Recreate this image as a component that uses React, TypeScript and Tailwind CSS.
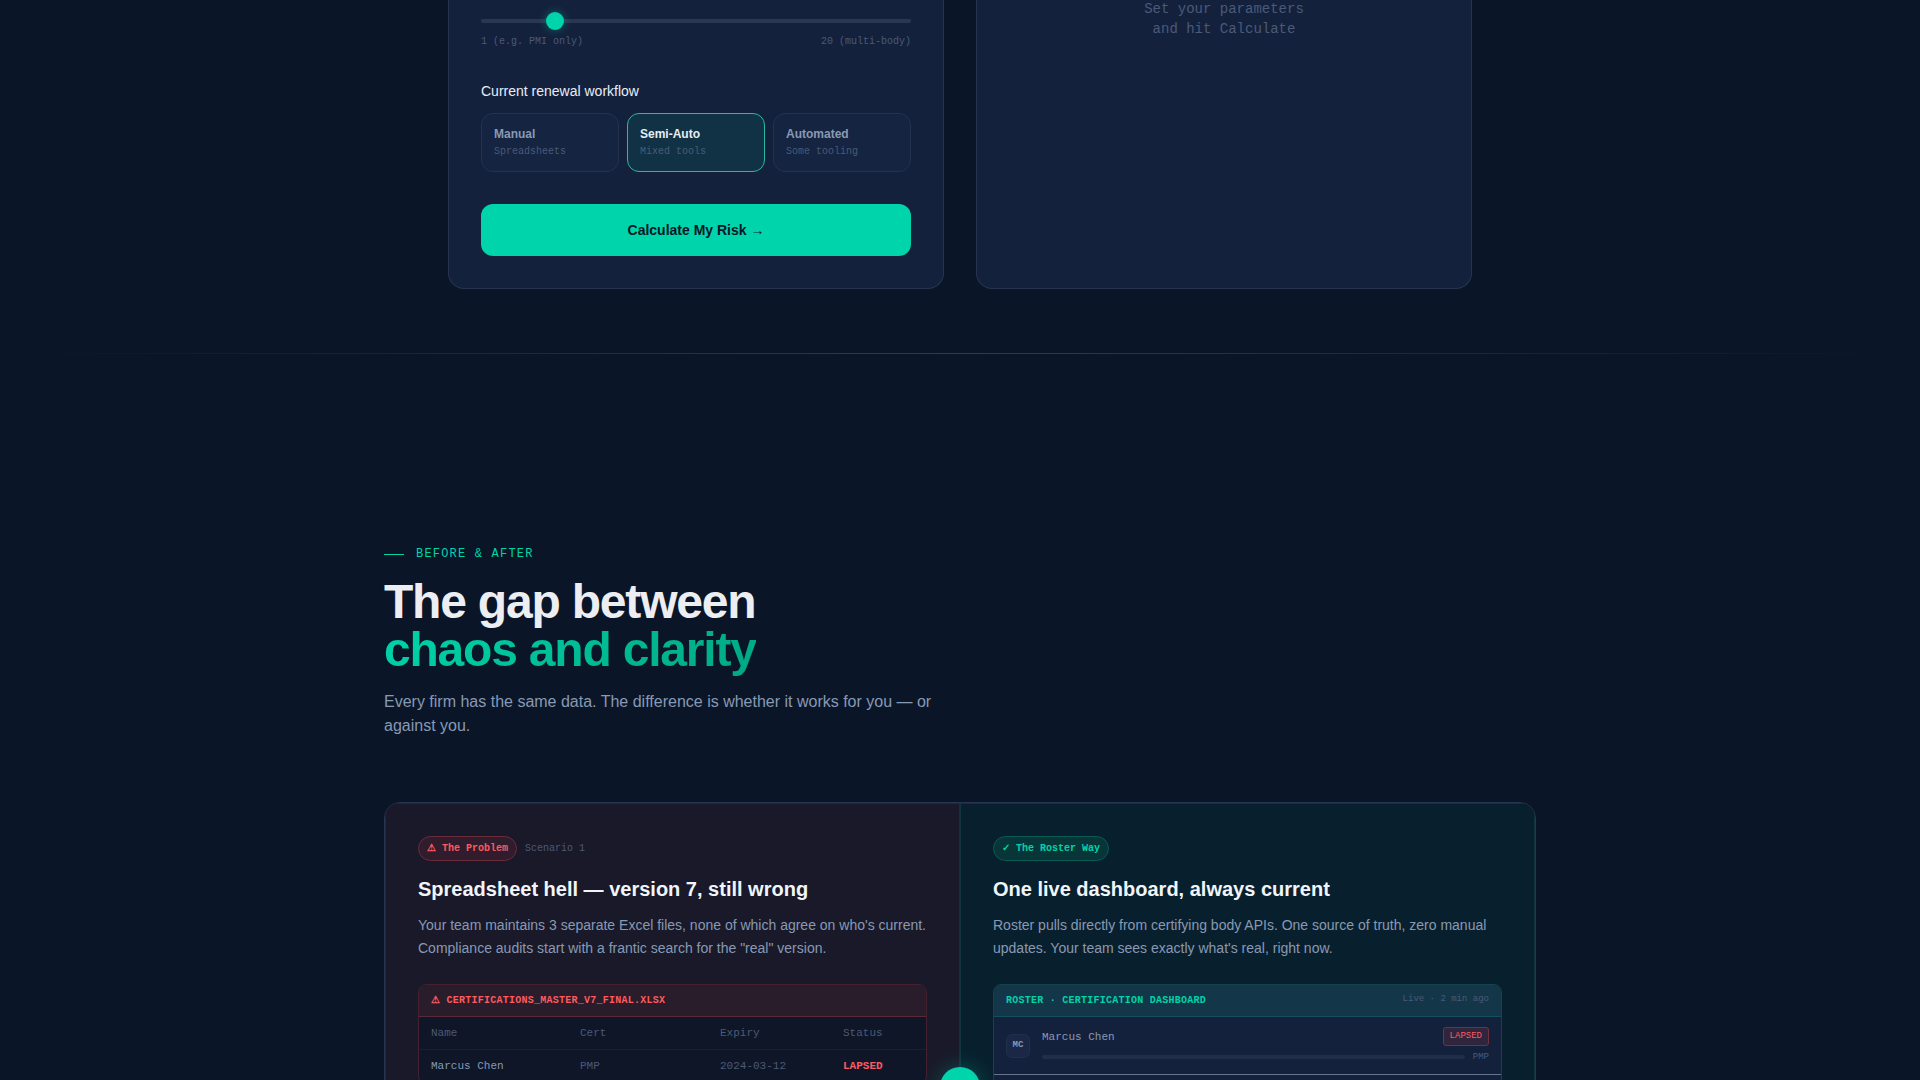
import { useState } from "react";

const workflows = [
  { id: "manual", title: "Manual", note: "Spreadsheets" },
  { id: "semi", title: "Semi-Auto", note: "Mixed tools" },
  { id: "auto", title: "Automated", note: "Some tooling" },
];

const mono = "font-['Liberation_Mono',monospace]";

function Glyph({ children }: { children: string }) {
  return <span className="font-['Liberation_Mono'] leading-none">{children}</span>;
}

function RiskCalculator() {
  const [bodies, setBodies] = useState(4);
  const [workflow, setWorkflow] = useState("semi");
  return (
    <section className="mx-auto grid w-full max-w-5xl grid-cols-2 gap-8">
      <form
        className="rounded-b-2xl border border-t-0 border-[#26344f] bg-[#14213d] px-8 pt-[19px] pb-8"
        onSubmit={(e) => e.preventDefault()}
      >
        <input
          type="range"
          min={1}
          max={20}
          value={bodies}
          aria-label="Certifying bodies"
          onChange={(e) => setBodies(Number(e.target.value))}
          className="block h-1 w-full cursor-pointer appearance-none rounded-full bg-[#2a3752] outline-none [&::-webkit-slider-thumb]:h-[18px] [&::-webkit-slider-thumb]:w-[18px] [&::-webkit-slider-thumb]:appearance-none [&::-webkit-slider-thumb]:rounded-full [&::-webkit-slider-thumb]:bg-[#00d4aa] [&::-webkit-slider-thumb]:shadow-[0_0_8px_rgba(0,212,170,0.4)]"
        />
        <div className={`${mono} mt-[11px] flex justify-between text-[10px] leading-[15px] text-[#4a5a78]`}>
          <span>1 (e.g. PMI only)</span>
          <span>20 (multi-body)</span>
        </div>
        <fieldset className="mt-8">
          <legend className="text-sm leading-5 text-[#e8edf5]">Current renewal workflow</legend>
          <div className="mt-3 grid grid-cols-3 gap-2">
            {workflows.map((w) => {
              const active = w.id === workflow;
              return (
                <button
                  key={w.id}
                  type="button"
                  aria-pressed={active}
                  onClick={() => setWorkflow(w.id)}
                  className={`rounded-xl border px-3 py-3 text-left ${
                    active ? "border-[#2bb7a0] bg-[#113244]" : "border-[#24324e] bg-[#152440]"
                  }`}
                >
                  <span
                    className={`block text-xs leading-4 font-bold ${active ? "text-[#e8edf5]" : "text-[#8899b4]"}`}
                  >
                    {w.title}
                  </span>
                  <span className={`${mono} mt-[2px] block text-[10px] leading-[15px] text-[#4a5a78]`}>
                    {w.note}
                  </span>
                </button>
              );
            })}
          </div>
        </fieldset>
        <button
          type="submit"
          className="mt-8 w-full rounded-xl bg-[#00d4aa] py-4 text-sm leading-5 font-bold text-[#0a1628]"
        >
          Calculate My Risk →
        </button>
      </form>
      <aside
        className={`${mono} rounded-b-2xl border border-t-0 border-[#26344f] bg-[#14213d] text-center text-sm leading-5 text-[#4a5a78]`}
      >
        <p className="-mt-px">
          Set your parameters
          <br />
          and hit Calculate
        </p>
      </aside>
    </section>
  );
}

function SpreadsheetMock() {
  return (
    <div className="mt-6 overflow-hidden rounded-lg border border-[#45212f] bg-[#0e1628]">
      <div
        className={`${mono} border-b border-[#5a2a38] bg-[#291d2b] px-3 py-2 text-[10px] leading-[15px] font-bold tracking-wide text-[#ff5a5f]`}
      >
        <Glyph>⚠</Glyph> CERTIFICATIONS_MASTER_V7_FINAL.XLSX
      </div>
      <table className={`${mono} w-full table-fixed border-collapse text-left text-[11px] leading-4`}>
        <colgroup>
          <col className="w-[149px]" />
          <col className="w-[140px]" />
          <col className="w-[123px]" />
          <col />
        </colgroup>
        <thead>
          <tr className="border-b border-[#182134] text-[#4a5a78]">
            {["Name", "Cert", "Expiry", "Status"].map((h) => (
              <th key={h} scope="col" className="px-3 py-2 font-normal">
                {h}
              </th>
            ))}
          </tr>
        </thead>
        <tbody>
          <tr className="border-b border-[#182134] text-[#4a5a78]">
            <td className="px-3 py-2 text-[#8899b4]">Marcus Chen</td>
            <td className="px-3 py-2">PMP</td>
            <td className="px-3 py-2">2024-03-12</td>
            <td className="px-3 py-2 font-bold text-[#ff5a5f]">LAPSED</td>
          </tr>
        </tbody>
      </table>
    </div>
  );
}

function DashboardMock() {
  return (
    <div className={`${mono} mt-6 overflow-hidden rounded-lg border border-[#14434d] bg-[#14213d]`}>
      <div className="flex justify-between border-b border-[#16505a] bg-[#133648] px-3 py-2">
        <span className="text-[10px] leading-[15px] font-bold tracking-wide text-[#00d4aa]">
          ROSTER · CERTIFICATION DASHBOARD
        </span>
        <span className="text-[9px] leading-[13px] text-[#4a5a78]">Live · 2 min ago</span>
      </div>
      <div className="flex items-center gap-3 border-b border-[#64748b] px-3 py-[10px]">
        <span className="flex size-6 shrink-0 items-center justify-center rounded-md border border-[#222e4c] bg-[#1a2747] text-[9px] font-bold text-[#8899b4]">
          MC
        </span>
        <div className="flex-1">
          <div className="flex items-start justify-between">
            <span className="text-[11px] leading-5 text-[#8899b4]">Marcus Chen</span>
            <span className="rounded-[3px] border border-[#73303f] bg-[#30253d] px-[6px] py-[2px] text-[9px] leading-[13px] text-[#ff5a5f]">
              LAPSED
            </span>
          </div>
          <div className="mt-[3px] flex items-center gap-2">
            <div className="h-1 flex-1 rounded-full bg-[#212e4a]" />
            <span className="text-[9px] leading-[14px] text-[#4a5a78]">PMP</span>
          </div>
        </div>
      </div>
      <div className="h-14" />
    </div>
  );
}

export default function App() {
  return (
    <main className="h-screen overflow-hidden bg-[#0a1628] font-['Liberation_Sans',Arial,sans-serif]">
      <RiskCalculator />

      <div className="mt-16 h-px bg-linear-to-r from-transparent from-2% via-[#00d4aa]/30 to-transparent to-98%" />

      <section className="mx-auto mt-48 w-full max-w-6xl">
        <p
          className={`${mono} flex items-center gap-3 text-xs leading-4 tracking-widest text-[#00d4aa]`}
        >
          <span className="h-px w-5 bg-[#00d4aa]" />
          BEFORE &amp; AFTER
        </p>
        <h2 className="mt-4 text-5xl leading-[48px] font-bold tracking-tight text-[#eceef2]">
          The gap between
          <br />
          <span className="bg-linear-135 from-[#00d4aa] to-[#00a884] bg-clip-text text-transparent">
            chaos and clarity
          </span>
        </h2>
        <p className="mt-4 max-w-xl text-base leading-6 text-[#8899b4]">
          Every firm has the same data. The difference is whether it works for you — or against you.
        </p>

        <div className="relative mt-16 grid min-h-[570px] grid-cols-2 overflow-hidden rounded-2xl border border-[#26344f]">
          <article className="border border-[#38202f] bg-[#19192a] p-8">
            <div className={`${mono} flex items-center gap-2 text-[10px] leading-[15px]`}>
              <span className="rounded-full border border-[#6b2c3a] bg-[#301c2c] px-2 py-1 font-bold text-[#ff5a5f]">
                <Glyph>⚠</Glyph> The Problem
              </span>
              <span className="text-[#4a5a78]">Scenario 1</span>
            </div>
            <h3 className="mt-4 text-xl leading-[25px] font-bold text-[#f1f5f9]">
              Spreadsheet hell — version 7, still wrong
            </h3>
            <p className="mt-3 text-sm leading-[23px] text-[#8899b4]">
              Your team maintains 3 separate Excel files, none of which agree on who's current.
              Compliance audits start with a frantic search for the "real" version.
            </p>
            <SpreadsheetMock />
          </article>
          <article className="border border-[#10343e] bg-[#08202e] p-8">
            <div className={`${mono} flex items-center text-[10px] leading-[15px]`}>
              <span className="rounded-full border border-[#0a5a55] bg-[#083538] px-2 py-1 font-bold text-[#00d4aa]">
                <Glyph>✓</Glyph> The Roster Way
              </span>
            </div>
            <h3 className="mt-4 text-xl leading-[25px] font-bold text-[#f1f5f9]">
              One live dashboard, always current
            </h3>
            <p className="mt-3 text-sm leading-[23px] text-[#8899b4]">
              Roster pulls directly from certifying body APIs. One source of truth, zero manual
              updates. Your team sees exactly what's real, right now.
            </p>
            <DashboardMock />
          </article>
          <span className="absolute top-1/2 left-1/2 size-10 -translate-x-1/2 -translate-y-1/2 rounded-full bg-[#00d4aa] shadow-[0_0_20px_rgba(0,212,170,0.3)]" />
        </div>
      </section>
    </main>
  );
}
